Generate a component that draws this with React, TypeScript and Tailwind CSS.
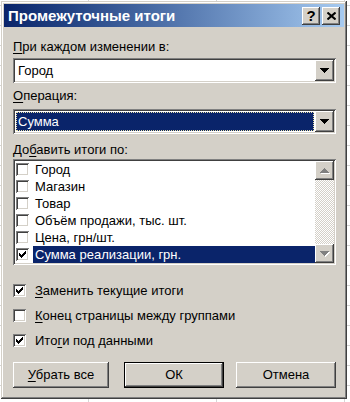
const font = "font-['Liberation_Sans',Arial,sans-serif]";
const raised =
  "shadow-[inset_-1px_-1px_#404040,inset_1px_1px_#ffffff,inset_-2px_-2px_#808080,inset_2px_2px_#d4d0c8]";
const sunken =
  "shadow-[inset_1px_1px_#808080,inset_-1px_-1px_#ffffff,inset_2px_2px_#404040,inset_-2px_-2px_#d4d0c8]";

function Arrow({ up = false, disabled = false }: { up?: boolean; disabled?: boolean }) {
  const pts = up ? "0,5 9,5 4.5,0" : "0,0 9,0 4.5,5";
  return (
    <svg width="10" height="6" viewBox="0 0 10 6" shapeRendering="crispEdges">
      {disabled && <polygon points={pts} fill="#ffffff" transform="translate(1,1)" />}
      <polygon points={pts} fill={disabled ? "#808080" : "#000000"} />
    </svg>
  );
}

function Check({ checked }: { checked: boolean }) {
  return (
    <span className={`relative block w-[13px] h-[13px] shrink-0 bg-white ${sunken}`}>
      {checked && (
        <svg className="absolute left-[3px] top-[3px]" width="7" height="7" viewBox="0 0 7 7" shapeRendering="crispEdges">
          <path d="M0 2h1v1h1v1h1V3h1V2h1V1h1V0h1v3h-1v1h-1v1h-1v1h-1v1H2V6H1V5H0z" fill="#000" />
        </svg>
      )}
    </span>
  );
}

function Combo({ value, focused }: { value: string; focused?: boolean }) {
  return (
    <div className={`flex h-[25px] bg-white p-[2px] ${sunken}`}>
      <div className="flex flex-1 items-stretch p-[1px]">
        {focused ? (
          <div className="flex flex-1 items-center bg-[#0a246a] border border-dotted border-[#e8e0a8] pl-[1px] text-white">
            {value}
          </div>
        ) : (
          <div className="flex flex-1 items-center pl-[2px]">{value}</div>
        )}
      </div>
      <div className={`flex w-[19px] items-center justify-center bg-[#d4d0c8] ${raised}`}>
        <Arrow />
      </div>
    </div>
  );
}

const fields = [
  "Город",
  "Магазин",
  "Товар",
  "Объём продажи, тыс. шт.",
  "Цена, грн/шт.",
  "Сумма реализации, грн.",
];

function Btn({ children, def, w }: { children: React.ReactNode; def?: boolean; w: string }) {
  return (
    <div className={`${w} h-[26px] ${def ? "border border-black" : ""}`}>
      <div className={`flex h-full items-center justify-center bg-[#d4d0c8] ${raised}`}>{children}</div>
    </div>
  );
}

export default function App() {
  return (
    <div
      className={`${font} w-[350px] h-[402px] overflow-hidden bg-white pl-[1px] pt-[1px] text-[13px] leading-[16px] text-black bg-[linear-gradient(to_right,#d6d6d6_1px,transparent_1px),linear-gradient(to_bottom,#d6d6d6_1px,transparent_1px)] bg-[size:128px_20px] bg-[position:-40px_5px]`}
    >
      <div className="flex w-[346px] h-[398px] flex-col bg-[#d4d0c8] p-[3px] shadow-[inset_-1px_-1px_#404040,inset_1px_1px_#d4d0c8,inset_-2px_-2px_#808080,inset_2px_2px_#ffffff]">
        <div className="flex h-[23px] items-center bg-gradient-to-r from-[#0a246a] to-[#a6caf0] pl-[4px] pr-[4px]">
          <span className="flex-1 text-[15px] font-bold text-white">Промежуточные итоги</span>
          <div className={`flex w-[18px] h-[18px] items-center justify-center bg-[#d4d0c8] ${raised} text-[15px] font-bold leading-none`}>
            ?
          </div>
          <div className={`ml-[2px] flex w-[18px] h-[18px] items-center justify-center bg-[#d4d0c8] ${raised}`}>
            <svg width="9" height="8" viewBox="0 0 9 8">
              <path d="M0.5 0.5 L8.5 7.5 M8.5 0.5 L0.5 7.5" stroke="#000" strokeWidth="2" />
            </svg>
          </div>
        </div>

        <div className="flex flex-col pl-[9px] pr-[8px]">
          <div className="mt-[12px]">
            <span className="underline underline-offset-2">П</span>ри каждом изменении в:
          </div>
          <div className="mt-[3px]">
            <Combo value="Город" />
          </div>
          <div className="mt-[5px]">
            <span className="underline underline-offset-2">О</span>перация:
          </div>
          <div className="mt-[5px]">
            <Combo value="Сумма" focused />
          </div>
          <div className="mt-[8px]">
            До<span className="underline underline-offset-2">б</span>авить итоги по:
          </div>

          <div className={`mt-[1px] flex h-[106px] bg-white p-[2px] ${sunken}`}>
            <div className="flex flex-1 flex-col">
              {fields.map((f, i) => {
                const sel = i === fields.length - 1;
                return (
                  <div key={f} className="flex h-[17px] items-center pl-[1px]">
                    <Check checked={sel} />
                    <span className={`ml-[4px] flex h-full flex-1 items-center px-[2px] ${sel ? "bg-[#0a246a] text-white" : ""}`}>
                      {f}
                    </span>
                  </div>
                );
              })}
            </div>
            <div className="flex w-[19px] flex-col bg-[repeating-conic-gradient(#d4d0c8_0_25%,#ffffff_0_50%)] bg-[size:2px_2px]">
              <div className={`flex h-[19px] items-center justify-center bg-[#d4d0c8] ${raised}`}>
                <Arrow up disabled />
              </div>
              <div className="flex-1" />
              <div className={`flex h-[19px] items-center justify-center bg-[#d4d0c8] ${raised}`}>
                <Arrow disabled />
              </div>
            </div>
          </div>

          <div className="mt-[13px] flex flex-col">
            <div className="flex h-[25px] items-center">
              <Check checked />
              <span className="ml-[9px]">
                <span className="underline underline-offset-2">З</span>аменить текущие итоги
              </span>
            </div>
            <div className="flex h-[25px] items-center">
              <Check checked={false} />
              <span className="ml-[9px]">
                <span className="underline underline-offset-2">К</span>онец страницы между группами
              </span>
            </div>
            <div className="flex h-[25px] items-center">
              <Check checked />
              <span className="ml-[9px]">
                Ито<span className="underline underline-offset-2">г</span>и под данными
              </span>
            </div>
          </div>

          <div className="mt-[9px] flex">
            <Btn w="w-[97px]">
              <span>
                <span className="underline underline-offset-2">У</span>брать все
              </span>
            </Btn>
            <div className="ml-[15px]">
              <Btn w="w-[100px]" def>
                ОК
              </Btn>
            </div>
            <div className="ml-[12px]">
              <Btn w="w-[100px]">Отмена</Btn>
            </div>
          </div>
        </div>
      </div>
    </div>
  );
}
